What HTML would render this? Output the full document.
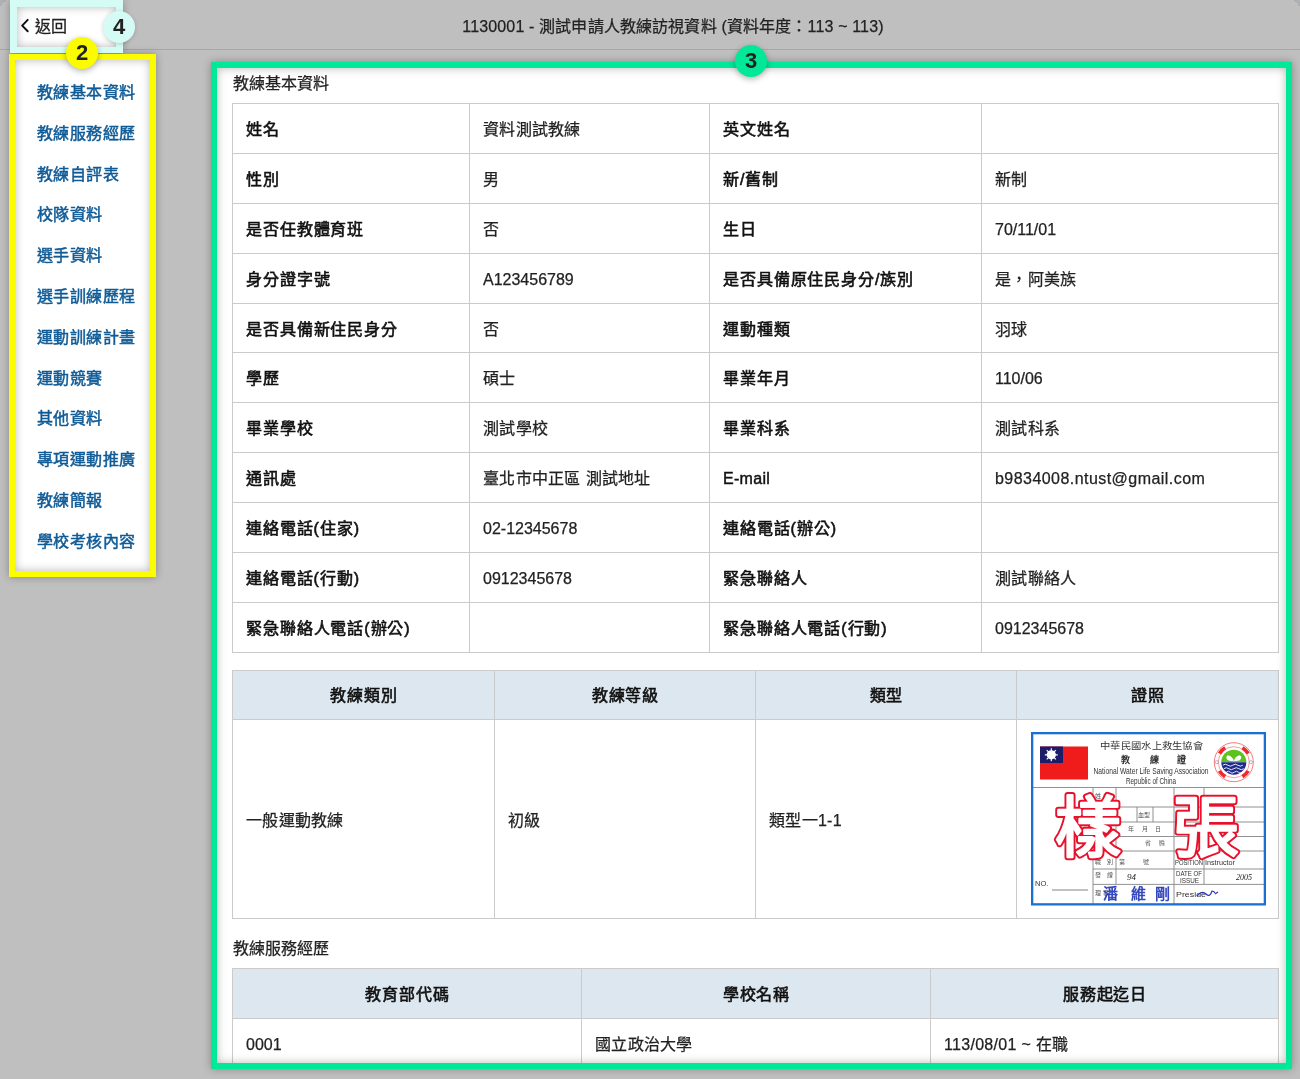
<!DOCTYPE html>
<html lang="zh-TW">
<head>
<meta charset="utf-8">
<style>
*{box-sizing:border-box;margin:0;padding:0}
html,body{width:1300px;height:1079px;overflow:hidden}
body{background:#bfbfbf;font-family:"Liberation Sans",sans-serif;font-size:16px;color:#222;position:relative}
.hdrline{position:absolute;left:0;top:49px;width:1300px;height:1px;background:#a8a8a8}
.title{position:absolute;left:0;top:16px;letter-spacing:0.15px;-webkit-text-stroke:0.25px #222;width:1346px;text-align:center;font-size:16px;line-height:22px;color:#222}
.hl{position:absolute;box-shadow:0 0 8px rgba(0,0,0,.3);background:#fff}
.ov{position:absolute;border-style:solid;box-shadow:inset 0 0 10px rgba(0,0,0,.28)}
.badge{position:absolute;width:32px;height:32px;border-radius:50%;font-weight:bold;font-size:22px;line-height:32px;text-align:center;color:#222;box-shadow:0 2px 6px rgba(0,0,0,.3)}
.nav{position:absolute;left:37px;font-size:16px;line-height:20px;color:#0f5b97;-webkit-text-stroke:0.5px #0f5b97;letter-spacing:0.45px;white-space:nowrap}
table{border-collapse:collapse;table-layout:fixed;position:absolute}
td,th{border:1px solid #cbcbcb;padding:3px 12px 0 13px;font-size:16px;line-height:20px;text-align:left;white-space:nowrap}
th{background:#dde7ef;text-align:center;font-weight:normal;-webkit-text-stroke:0.6px #111;color:#111;letter-spacing:0.9px;padding-top:2px}
td.b{-webkit-text-stroke:0.6px #111;color:#111;letter-spacing:0.9px}
td{letter-spacing:0.3px;-webkit-text-stroke:0.25px #222}
.sec{position:absolute;left:233px;font-size:16px;line-height:20px;color:#222;-webkit-text-stroke:0.25px #222}
</style>
</head>
<body>
<div id="root" style="position:absolute;left:0;top:0;width:1300px;height:1079px;will-change:transform">
<div class="hdrline"></div>
<svg style="position:absolute;left:0;top:0" width="8" height="8"><path d="M0.6 6A5.4 5.4 0 0 1 6 0.6" fill="none" stroke="#a3a5a8" stroke-width="1.2"/><path d="M0 0H6A6 6 0 0 0 0 6Z" fill="#b0b1b3"/></svg>
<svg style="position:absolute;left:1292px;top:0" width="8" height="8"><path d="M2 0.6A5.4 5.4 0 0 1 7.4 6" fill="none" stroke="#a3a5a8" stroke-width="1.2"/><path d="M8 0H2A6 6 0 0 1 8 6Z" fill="#b0b1b3"/></svg>

<div class="title">1130001 - 測試申請人教練訪視資料 (資料年度：113 ~ 113)</div>

<!-- back button highlight (4) -->
<div class="hl" style="left:10px;top:0;width:113px;height:53px"></div>
<svg style="position:absolute;left:19px;top:17px" width="12" height="17" viewBox="0 0 12 17"><path d="M8.7 2.9 L3.2 8.6 L8.7 14.2" fill="none" stroke="#111" stroke-width="2" stroke-linecap="round" stroke-linejoin="round"/></svg>
<div style="position:absolute;left:35px;top:17px;font-size:16px;line-height:20px;color:#222;-webkit-text-stroke:0.3px #222">返回</div>

<!-- sidebar highlight (2) -->
<div class="hl" style="left:9px;top:54px;width:147px;height:523px"></div>
<div class="nav" style="top:83px">教練基本資料</div>
<div class="nav" style="top:124px">教練服務經歷</div>
<div class="nav" style="top:165px">教練自評表</div>
<div class="nav" style="top:205px">校隊資料</div>
<div class="nav" style="top:246px">選手資料</div>
<div class="nav" style="top:287px">選手訓練歷程</div>
<div class="nav" style="top:328px">運動訓練計畫</div>
<div class="nav" style="top:369px">運動競賽</div>
<div class="nav" style="top:409px">其他資料</div>
<div class="nav" style="top:450px">專項運動推廣</div>
<div class="nav" style="top:491px">教練簡報</div>
<div class="nav" style="top:532px">學校考核內容</div>

<div class="ov" style="left:10px;top:0;width:113px;height:53px;border-color:#d4fcf4;border-width:7px 7px 6px 7px"></div>
<div class="ov" style="left:9px;top:54px;width:147px;height:523px;border-color:#fcfc00;border-width:6px"></div>
<div class="badge" style="left:103px;top:11px;background:#d4fcf4;box-shadow:0 1px 4px rgba(0,0,0,.18)">4</div>
<div class="badge" style="left:66px;top:37px;background:#fcfc00">2</div>

<!-- main content highlight (3) -->
<div class="hl" style="left:211px;top:62px;width:1081px;height:1007px"></div>
<div class="sec" style="top:74px">教練基本資料</div>

<table id="t1" style="left:232px;top:103px;width:1046px">
<colgroup><col style="width:237px"><col style="width:240px"><col style="width:272px"><col style="width:297px"></colgroup>
<tr style="height:49.9px"><td class="b">姓名</td><td>資料測試教練</td><td class="b">英文姓名</td><td></td></tr>
<tr style="height:49.9px"><td class="b">性別</td><td>男</td><td class="b">新/舊制</td><td>新制</td></tr>
<tr style="height:49.9px"><td class="b">是否任教體育班</td><td>否</td><td class="b">生日</td><td style="letter-spacing:0">70/11/01</td></tr>
<tr style="height:49.9px"><td class="b">身分證字號</td><td style="letter-spacing:0">A123456789</td><td class="b">是否具備原住民身分/族別</td><td>是，阿美族</td></tr>
<tr style="height:49.9px"><td class="b">是否具備新住民身分</td><td>否</td><td class="b">運動種類</td><td>羽球</td></tr>
<tr style="height:49.9px"><td class="b">學歷</td><td>碩士</td><td class="b">畢業年月</td><td style="letter-spacing:0">110/06</td></tr>
<tr style="height:49.9px"><td class="b">畢業學校</td><td>測試學校</td><td class="b">畢業科系</td><td>測試科系</td></tr>
<tr style="height:49.9px"><td class="b">通訊處</td><td>臺北市中正區 測試地址</td><td class="b" style="letter-spacing:0.3px;-webkit-text-stroke:0.45px #111">E-mail</td><td style="letter-spacing:0.45px">b9834008.ntust@gmail.com</td></tr>
<tr style="height:49.9px"><td class="b">連絡電話(住家)</td><td style="letter-spacing:0">02-12345678</td><td class="b">連絡電話(辦公)</td><td></td></tr>
<tr style="height:49.9px"><td class="b">連絡電話(行動)</td><td style="letter-spacing:0">0912345678</td><td class="b">緊急聯絡人</td><td>測試聯絡人</td></tr>
<tr style="height:49.9px"><td class="b">緊急聯絡人電話(辦公)</td><td></td><td class="b">緊急聯絡人電話(行動)</td><td style="letter-spacing:0">0912345678</td></tr>
</table>
<table id="t2" style="left:232px;top:670px;width:1046px">
<colgroup><col style="width:262px"><col style="width:261px"><col style="width:261px"><col style="width:262px"></colgroup>
<tr style="height:49px"><th>教練類別</th><th>教練等級</th><th>類型</th><th>證照</th></tr>
<tr style="height:199px"><td>一般運動教練</td><td>初級</td><td>類型一1-1</td><td style="padding:0 12px"></td></tr>
</table>
<div class="sec" style="top:939px">教練服務經歷</div>
<table id="t3" style="left:232px;top:968px;width:1046px">
<colgroup><col style="width:349px"><col style="width:349px"><col style="width:348px"></colgroup>
<tr style="height:50px"><th>教育部代碼</th><th>學校名稱</th><th>服務起迄日</th></tr>
<tr style="height:50px"><td style="letter-spacing:0">0001</td><td>國立政治大學</td><td>113/08/01 ~ 在職</td></tr>
</table>
<svg style="position:absolute;left:1030px;top:731px" width="238" height="176" viewBox="1030 731 238 176">
<rect x="1031" y="732" width="235" height="173.5" fill="#fff"/>
<g fill="none" stroke="#858585" stroke-width="0.9">
<path d="M1032 787.5H1265M1093 787.5V904M1116 787.5V884M1174 787.5V904M1204 787.5V807M1204 851V884M1116 807H1265M1137 807V822M1153 807V822M1116 822H1265M1116 836.5H1265M1093 851H1265M1093 869H1265M1093 884.4H1265"/>
<path d="M1052 890H1088" stroke="#777"/>
</g>
<rect x="1040" y="746.5" width="48" height="33" fill="#f01c1c"/>
<rect x="1040" y="746.5" width="23" height="16.5" fill="#1c1c6a"/>
<circle cx="1051.3" cy="754.8" r="4.6" fill="#fff"/>
<g stroke="#fff" stroke-width="1.2"><path d="M1051.3 748.3V761.3M1044.8 754.8H1057.8M1046.7 750.2L1055.9 759.4M1046.7 759.4L1055.9 750.2"/></g>
<g font-family="Liberation Serif,serif" fill="#333">
<text x="1100" y="749" font-size="9" textLength="103" lengthAdjust="spacingAndGlyphs">中華民國水上救生協會</text>
<text x="1121" y="763" font-size="9" font-weight="bold">教</text>
<text x="1150" y="763" font-size="9" font-weight="bold">練</text>
<text x="1177" y="763" font-size="9" font-weight="bold">證</text>
</g>
<g font-family="Liberation Sans,sans-serif" fill="#333">
<text x="1093.5" y="773.8" font-size="9" textLength="115" lengthAdjust="spacingAndGlyphs">National  Water  Life  Saving  Association</text>
<text x="1126" y="784" font-size="9" textLength="50" lengthAdjust="spacingAndGlyphs">Republic of China</text>
<text x="1035" y="886" font-size="7.5">NO.</text>
<text x="1175" y="865" font-size="7" textLength="28" lengthAdjust="spacingAndGlyphs">POSITION</text>
<text x="1205" y="865" font-size="7.5" textLength="30" lengthAdjust="spacingAndGlyphs">Instructor</text>
<text x="1176" y="876" font-size="7" textLength="26" lengthAdjust="spacingAndGlyphs">DATE OF</text>
<text x="1180" y="883" font-size="7" textLength="19" lengthAdjust="spacingAndGlyphs">ISSUE</text>
<text x="1176" y="897" font-size="7.5" textLength="30" lengthAdjust="spacingAndGlyphs">Preside</text>
<text x="1095" y="864" font-size="6" fill="#555">職　別　第　　　號</text>
<text x="1095" y="877" font-size="6" fill="#555">發　證</text>
<text x="1095" y="895" font-size="6" fill="#555">理 事</text>
<text x="1095" y="798" font-size="6" fill="#555">姓 名</text>
<text x="1138" y="817" font-size="6" fill="#555">血型</text>
<text x="1128" y="831" font-size="6" fill="#555">年　 月　 日</text>
<text x="1145" y="845" font-size="6" fill="#555">省　 縣</text>
</g>
<g fill="#1f35b8" font-family="Liberation Serif,serif" font-size="15" font-weight="bold" opacity="0.9">
<text x="1103" y="899">潘</text><text x="1131" y="899">維</text><text x="1155" y="899">剛</text>
</g>
<path d="M1197 896q5-6 9-2t6-3q2 0 3 2M1215 894l3-2" stroke="#2436c8" stroke-width="1.2" fill="none"/>
<text x="1127" y="880" font-size="9" font-style="italic" fill="#222" font-family="Liberation Serif,serif">94</text>
<text x="1236" y="880" font-size="8" font-style="italic" fill="#222" font-family="Liberation Serif,serif">2005</text>
<g transform="translate(1233.8 762.2)">
<circle r="19.5" fill="#fff" stroke="#f05a5a" stroke-width="0.8"/>
<circle r="15.5" fill="none" stroke="#f05a5a" stroke-width="0.6"/>
<g stroke="#f02a2a" stroke-width="3.6" fill="none"><path d="M14.40 8.65A16.8 16.8 0 0 1 8.65 14.40M-8.65 14.40A16.8 16.8 0 0 1 -14.40 8.65M-14.40 -8.65A16.8 16.8 0 0 1 -8.65 -14.40M8.65 -14.40A16.8 16.8 0 0 1 14.40 -8.65"/></g><circle cx="-17" cy="0" r="1.6" fill="none" stroke="#8890d0" stroke-width="0.7"/><circle cx="17" cy="0" r="1.6" fill="none" stroke="#8890d0" stroke-width="0.7"/>
<path d="M-12.5 0A12.5 12.5 0 0 1 12.5 0Z" fill="#5cc21e"/>
<path d="M-12.5 0A12.5 12.5 0 0 0 12.5 0Z" fill="#1d2a8c"/>
<g stroke="#fff" stroke-width="0.9" fill="none"><path d="M-11 3q2.5-2 5 0t5 0t5 0t5 0M-10 6.5q2.5-2 5 0t5 0t5 0t5 0M-7.5 10q2.5-2 4 0t4 0t4 0t4 0"/></g>
<path d="M0 -1q-1-5-6-6q-3 2 0 5q3 1 6 1q3 0 6-1q3-3 0-5q-5 1-6 6" fill="#fff"/>
</g>
<g font-family="Liberation Sans,sans-serif" font-size="66" stroke-linejoin="round" stroke-linecap="round">
<text x="1055" y="851" fill="none" stroke="#e8102a" stroke-width="6.5">樣</text>
<text x="1055" y="851" fill="#fff" stroke="#fff" stroke-width="2.6">樣</text>
<text x="1173" y="851" fill="none" stroke="#e8102a" stroke-width="6.5">張</text>
<text x="1173" y="851" fill="#fff" stroke="#fff" stroke-width="2.6">張</text>
</g>
<rect x="1032.15" y="733.15" width="232.7" height="171.2" fill="none" stroke="#1a6fd2" stroke-width="2.3"/>
</svg>


<div class="ov" style="left:211px;top:62px;width:1081px;height:1007px;border-color:#00e898;border-width:6px"></div>
<div class="badge" style="left:735px;top:45px;background:#00e898">3</div>
</div>
</body>
</html>
